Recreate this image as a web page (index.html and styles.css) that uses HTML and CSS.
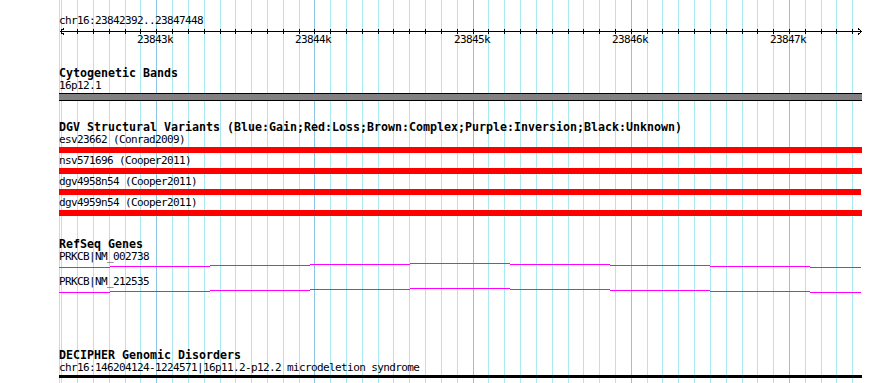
FILE: index.html
```html
<!DOCTYPE html>
<html lang="en">
<head>
<meta charset="utf-8">
<title>Genome browser</title>
<link rel="stylesheet" href="styles.css">
</head>
<body>
<div class="panel">
  <svg class="grid" width="803" height="383" viewBox="0 0 803 383" aria-hidden="true">
    <path class="grid-minor" d="M0.5 0V383M2.5 0V383M18.5 0V383M34.5 0V383M50.5 0V383M66.5 0V383M81.5 0V383M113.5 0V383M129.5 0V383M145.5 0V383M161.5 0V383M176.5 0V383M192.5 0V383M208.5 0V383M224.5 0V383M240.5 0V383M271.5 0V383M287.5 0V383M303.5 0V383M319.5 0V383M334.5 0V383M350.5 0V383M366.5 0V383M382.5 0V383M398.5 0V383M429.5 0V383M445.5 0V383M461.5 0V383M477.5 0V383M493.5 0V383M509.5 0V383M524.5 0V383M540.5 0V383M556.5 0V383M588.5 0V383M603.5 0V383M619.5 0V383M635.5 0V383M651.5 0V383M667.5 0V383M683.5 0V383M698.5 0V383M714.5 0V383M746.5 0V383M762.5 0V383M777.5 0V383M793.5 0V383"/>
    <path class="grid-major" d="M97.5 0V383M255.5 0V383M414.5 0V383M572.5 0V383M730.5 0V383"/>
  </svg>
  <div class="content">
    <div class="label">chr16:23842392..23847448</div>
    <svg class="ruler" width="803" height="19" viewBox="0 0 803 19">
      <path class="ruler-line" d="M1 4.5H803"/>
      <path class="ruler-line" d="M5 1.5L1.5 4.5L5 7.5M799 1.5L802.5 4.5L799 7.5"/>
      <path class="ruler-line" d="M2.5 2V7M18.5 2V7M34.5 2V7M50.5 2V7M66.5 2V7M81.5 2V7M97.5 2V7M113.5 2V7M129.5 2V7M145.5 2V7M161.5 2V7M176.5 2V7M192.5 2V7M208.5 2V7M224.5 2V7M240.5 2V7M255.5 2V7M271.5 2V7M287.5 2V7M303.5 2V7M319.5 2V7M334.5 2V7M350.5 2V7M366.5 2V7M382.5 2V7M398.5 2V7M414.5 2V7M429.5 2V7M445.5 2V7M461.5 2V7M477.5 2V7M493.5 2V7M509.5 2V7M524.5 2V7M540.5 2V7M556.5 2V7M572.5 2V7M588.5 2V7M603.5 2V7M619.5 2V7M635.5 2V7M651.5 2V7M667.5 2V7M683.5 2V7M698.5 2V7M714.5 2V7M730.5 2V7M746.5 2V7M762.5 2V7M777.5 2V7M793.5 2V7"/>
      <text class="ruler-text" x="78" y="16">23843k</text>
      <text class="ruler-text" x="236" y="16">23844k</text>
      <text class="ruler-text" x="395" y="16">23845k</text>
      <text class="ruler-text" x="553" y="16">23846k</text>
      <text class="ruler-text" x="711" y="16">23847k</text>
    </svg>

    <section class="track track-cyto">
      <div class="title">Cytogenetic Bands</div>
      <div class="label">16p12.1</div>
      <div class="band"></div>
    </section>

    <section class="track track-dgv">
      <div class="title">DGV Structural Variants (Blue:Gain;Red:Loss;Brown:Complex;Purple:Inversion;Black:Unknown)</div>
      <div class="variant">
        <div class="label">esv23662 (Conrad2009)</div>
        <div class="sv-bar"></div>
      </div>
      <div class="variant">
        <div class="label">nsv571696 (Cooper2011)</div>
        <div class="sv-bar"></div>
      </div>
      <div class="variant">
        <div class="label">dgv4958n54 (Cooper2011)</div>
        <div class="sv-bar" style="width:802px"></div>
      </div>
      <div class="variant">
        <div class="label">dgv4959n54 (Cooper2011)</div>
        <div class="sv-bar"></div>
      </div>
    </section>

    <section class="track track-genes">
      <div class="title">RefSeq Genes</div>
      <div class="gene">
        <div class="label">PRKCB|NM_002738</div>
        <svg class="gene-line" width="803" height="5" viewBox="0 0 803 5">
          <path d="M0 4.5H51M51 3.5H151M151 2.5H251M251 1.5H351M351 0.5H451M451 1.5H551M551 2.5H651M651 3.5H751M751 4.5H802"/>
        </svg>
      </div>
      <div class="gene">
        <div class="label">PRKCB|NM_212535</div>
        <svg class="gene-line" width="803" height="5" viewBox="0 0 803 5">
          <path d="M0 4.5H51M51 3.5H151M151 2.5H251M251 1.5H351M351 0.5H451M451 1.5H551M551 2.5H651M651 3.5H751M751 4.5H802"/>
        </svg>
      </div>
    </section>

    <section class="track track-decipher">
      <div class="title">DECIPHER Genomic Disorders</div>
      <div class="label">chr16:146204124-1224571|16p11.2-p12.2 microdeletion syndrome</div>
      <div class="disorder-bar"></div>
    </section>
  </div>
</div>
</body>
</html>
```

FILE: styles.css
```css
body {
  margin: 0;
  background: #ffffff;
}

.panel {
  position: relative;
  margin-left: 59px;
  width: 803px;
  height: 383px;
  overflow: hidden;
  font-family: "DejaVu Sans Mono", "Liberation Mono", monospace;
  color: #000;
}

.grid {
  position: absolute;
  left: 0;
  top: 0;
  width: 803px;
  height: 383px;
  shape-rendering: crispEdges;
}

.grid-minor {
  stroke: #a8e8ef;
  stroke-width: 1;
  fill: none;
}

.grid-major {
  stroke: #8cc4e4;
  stroke-width: 1;
  fill: none;
}

.content {
  position: relative;
  padding-top: 15px;
}

.label {
  font-size: 11px;
  letter-spacing: -0.62px;
  line-height: 12px;
  height: 12px;
  white-space: nowrap;
}

.title {
  font-size: 11.63px;
  font-weight: bold;
  line-height: 13px;
  height: 13px;
  white-space: nowrap;
}

.ruler {
  display: block;
  width: 803px;
  height: 19px;
}

.ruler-line {
  stroke: #000;
  stroke-width: 1;
  fill: none;
  shape-rendering: crispEdges;
}

.ruler-text {
  font-family: "DejaVu Sans Mono", "Liberation Mono", monospace;
  font-size: 11px;
  letter-spacing: -0.62px;
  fill: #000;
}

.track-cyto {
  margin-top: 21px;
}

.band {
  margin-top: 1px;
  height: 6px;
  border-top: 1px solid #000;
  border-bottom: 1px solid #000;
  background: #828082;
}

.track-dgv {
  margin-top: 20px;
}

.variant {
  margin-bottom: 2px;
}

.sv-bar {
  margin-top: 1px;
  height: 6px;
  background: #ff0000;
}

.track-genes {
  margin-top: 22px;
}

.gene {
  margin-bottom: 8px;
}

.gene-line {
  display: block;
  width: 803px;
  height: 5px;
  shape-rendering: crispEdges;
}

.gene-line path {
  stroke: #ff00ff;
  stroke-width: 1;
  fill: none;
}

.track-decipher {
  margin-top: 56px;
}

.disorder-bar {
  margin-top: 1px;
  height: 3px;
  background: #000;
}
```
